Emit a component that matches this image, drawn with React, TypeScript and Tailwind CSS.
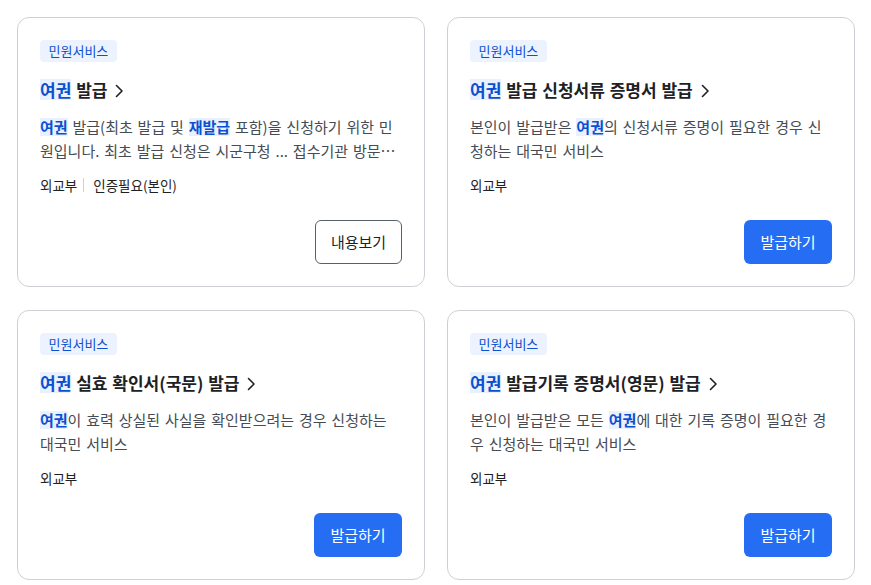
import React from 'react';

interface Service {
  title: React.ReactNode;
  desc: React.ReactNode;
  meta: string[];
  action: 'view' | 'issue';
}

// highlighted search keyword
function Hl({ children, size }: { children: React.ReactNode; size: 'title' | 'body' }) {
  return (
    <span
      className={`inline-block bg-[#eaf1fe] font-bold text-[#0b50d0] ${
        size === 'title' ? 'leading-[21px]' : 'leading-[18px]'
      }`}
    >
      {children}
    </span>
  );
}

const SERVICES: Service[] = [
  {
    title: (
      <>
        <Hl size="title">여권</Hl> 발급
      </>
    ),
    desc: (
      <>
        <Hl size="body">여권</Hl> 발급(최초 발급 및 <Hl size="body">재발급</Hl> 포함)을 신청하기 위한 민원입니다. 최초 발급 신청은 시군구청 ... 접수기관 방문 신청이 필요합니다.
      </>
    ),
    meta: ['외교부', '인증필요(본인)'],
    action: 'view',
  },
  {
    title: (
      <>
        <Hl size="title">여권</Hl> 발급 신청서류 증명서 발급
      </>
    ),
    desc: (
      <>
        본인이 발급받은 <Hl size="body">여권</Hl>의 신청서류 증명이 필요한 경우 신청하는 대국민 서비스
      </>
    ),
    meta: ['외교부'],
    action: 'issue',
  },
  {
    title: (
      <>
        <Hl size="title">여권</Hl> 실효 확인서(국문) 발급
      </>
    ),
    desc: (
      <>
        <Hl size="body">여권</Hl>이 효력 상실된 사실을 확인받으려는 경우 신청하는 대국민 서비스
      </>
    ),
    meta: ['외교부'],
    action: 'issue',
  },
  {
    title: (
      <>
        <Hl size="title">여권</Hl> 발급기록 증명서(영문) 발급
      </>
    ),
    desc: (
      <>
        본인이 발급받은 모든 <Hl size="body">여권</Hl>에 대한 기록 증명이 필요한 경우 신청하는 대국민 서비스
      </>
    ),
    meta: ['외교부'],
    action: 'issue',
  },
];

function Chevron() {
  return (
    <svg width="9" height="14" viewBox="0 0 9 14" fill="none" className="ml-2 inline-block align-[-1px]">
      <path d="M1.5 1.5L7 7L1.5 12.5" stroke="#1e2124" strokeWidth="1.6" strokeLinecap="round" strokeLinejoin="round" />
    </svg>
  );
}

function ServiceCard({ item }: { item: Service }) {
  return (
    <div className="flex h-[270px] flex-col rounded-[12px] border border-[#cdd1d5] bg-white p-[22px]">
      <span className="self-start rounded-[4px] bg-[#ecf2fe] px-[8.5px] text-[13px] leading-[22px] text-[#0b50d0]">
        민원서비스
      </span>

      <a href="#" className="mt-[15px] self-start text-[17px] font-bold leading-[26px] text-[#1e2124] [word-spacing:1px]">
        {item.title}
        <Chevron />
      </a>

      <p className="mt-[12px] line-clamp-2 pr-[2px] text-[15px] leading-6 text-[#464c53] [word-spacing:1.5px]">
        {item.desc}
      </p>

      <div className="mt-[12px] flex items-center text-[13.5px] leading-[20px] text-[#1e2124]">
        {item.meta.map((m, i) => (
          <React.Fragment key={m}>
            {i > 0 && <span className="ml-[6px] mr-[9px] h-[14px] w-px bg-[#cdd1d5]" />}
            <span>{m}</span>
          </React.Fragment>
        ))}
      </div>

      {/* Actions */}
      <div className="mt-auto flex justify-end">
        {item.action === 'view' ? (
          <button className="h-[44px] w-[87px] rounded-[6px] border border-[#58616a] bg-white text-[15px] text-[#1e2124]">
            내용보기
          </button>
        ) : (
          <button className="h-[44px] w-[88px] rounded-[6px] bg-[#256ef4] text-[15px] text-white">
            발급하기
          </button>
        )}
      </div>
    </div>
  );
}

export default function App() {
  return (
    <div className="min-h-screen bg-white pl-[17px] pr-[16px] pt-[17px] font-['Noto_Sans_CJK_KR','Noto_Sans',sans-serif]">
      <div className="grid grid-cols-2 gap-x-[22px] gap-y-[23px]">
        {SERVICES.map((s, i) => (
          <ServiceCard key={i} item={s} />
        ))}
      </div>
    </div>
  );
}
